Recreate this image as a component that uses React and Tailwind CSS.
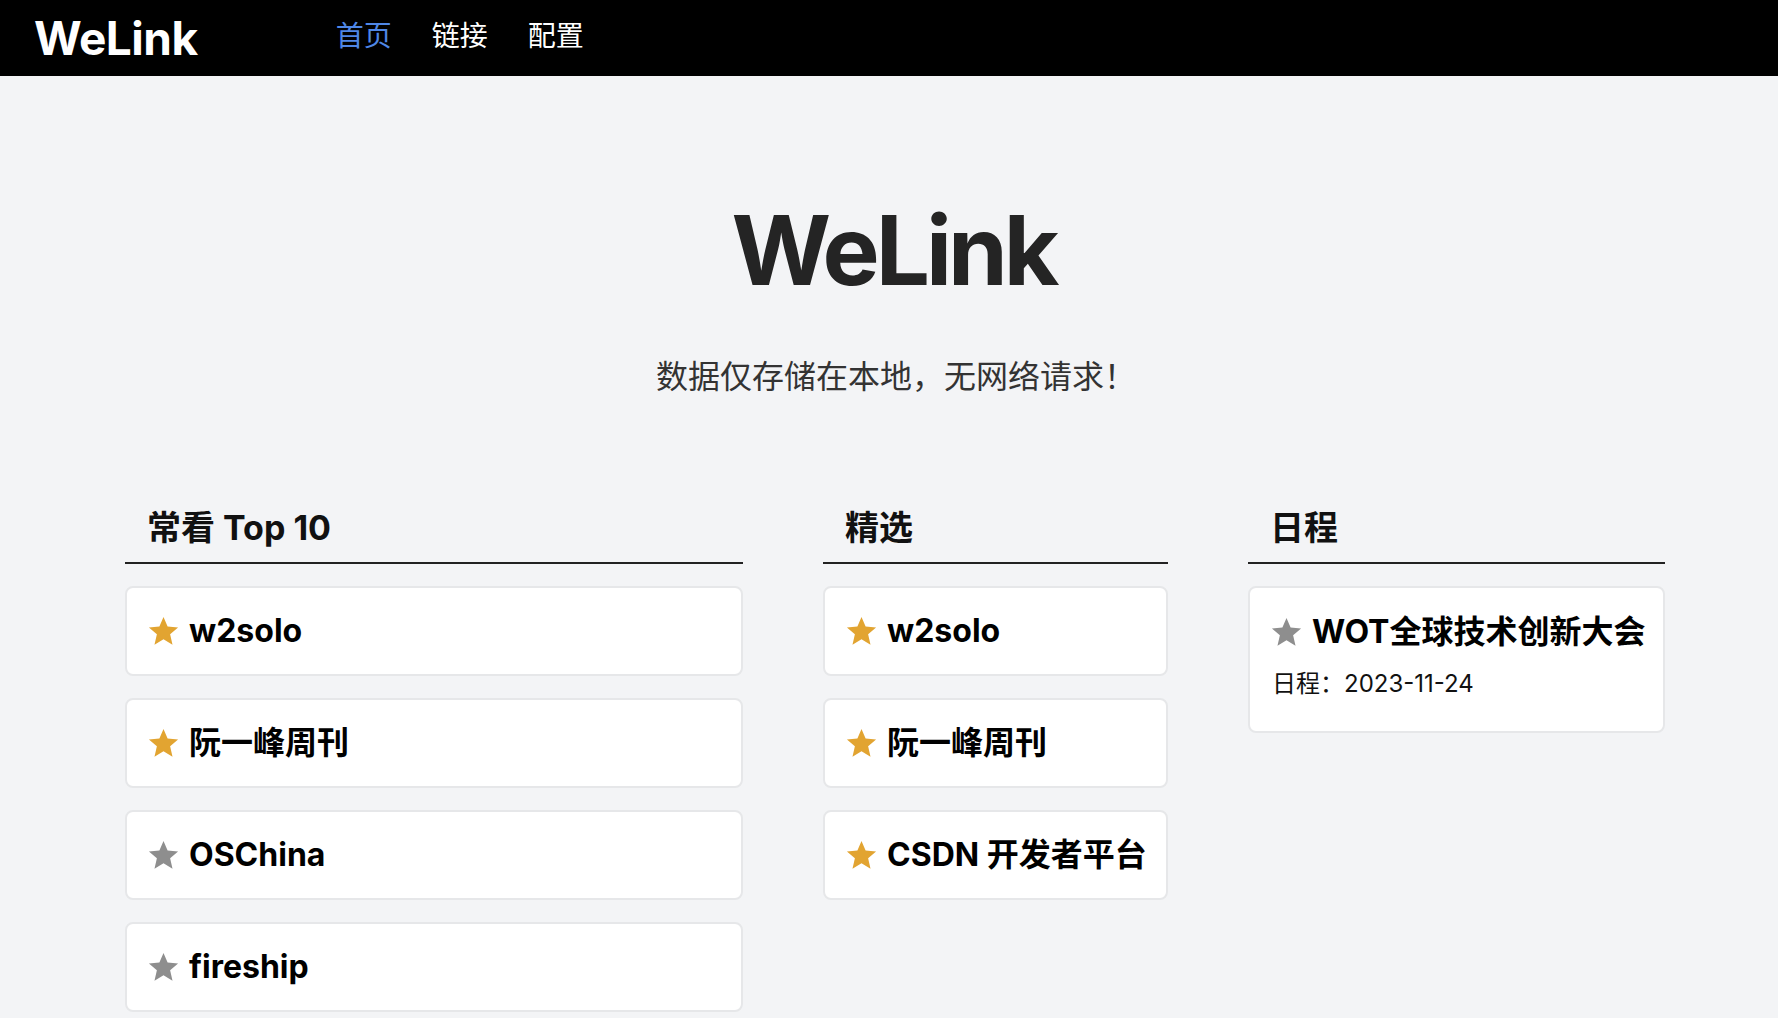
import React from "react";
import { MdStar } from "react-icons/md";

const FONT = "font-['Inter','Noto_Sans_CJK_SC',sans-serif]";

function Card({ title, on }) {
  return (
    <div className="h-[90px] bg-white border-2 border-[#e6e7e9] rounded-lg flex items-center pl-[19px] pr-[20px]">
      <MdStar size={35} className={on ? "text-[#e2a431] shrink-0" : "text-[#8e8e8e] shrink-0"} />
      <span className="ml-[8px] text-[32px] font-bold leading-[40px] text-black whitespace-nowrap">
        {title}
      </span>
    </div>
  );
}

function Heading({ children }) {
  return (
    <h2 className="px-[22px] text-[34px] font-bold leading-[48px] pb-[10px] border-b-2 border-[#222] text-[#111]">
      {children}
    </h2>
  );
}

export default function App() {
  return (
    <div className={`min-h-screen bg-[#f3f4f6] ${FONT}`}>
      <header className="h-[76px] bg-black flex items-center pl-[34px]">
        <div className="text-[46px] font-bold leading-none text-white tracking-[-0.5px] -mt-[1px]">WeLink</div>
        <nav className="ml-[138px] flex gap-[40px] text-[28px] leading-none -mt-[4px]">
          <span className="text-[#4f87e6]">首页</span>
          <span className="text-white">链接</span>
          <span className="text-white">配置</span>
        </nav>
      </header>

      <main className="pt-[126px]">
        <h1 className="pl-[9px] text-center text-[96px] font-bold leading-none text-[#242424] tracking-[-4px]">WeLink</h1>
        <p className="mt-[55px] pl-[14px] text-center text-[32px] leading-[48px] text-[#333]">
          数据仅存储在本地，无网络请求！
        </p>

        <div className="mt-[103px] ml-[125px] w-[1540px] flex gap-[80px] items-start">
          <section className="w-[618px]">
            <Heading>常看 Top 10</Heading>
            <div className="mt-[22px] flex flex-col gap-[22px]">
              <Card title="w2solo" on />
              <Card title="阮一峰周刊" on />
              <Card title="OSChina" />
              <Card title="fireship" />
            </div>
          </section>

          <section className="w-[345px]">
            <Heading>精选</Heading>
            <div className="mt-[22px] flex flex-col gap-[22px]">
              <Card title="w2solo" on />
              <Card title="阮一峰周刊" on />
              <Card title="CSDN 开发者平台" on />
            </div>
          </section>

          <section className="w-[417px]">
            <Heading>日程</Heading>
            <div className="mt-[22px]">
              <div className="bg-white border-2 border-[#e6e7e9] rounded-lg pl-[19px] pt-[24px] pb-[29px]">
                <div className="flex items-center h-[40px]">
                  <MdStar size={35} className="text-[#8e8e8e] shrink-0" />
                  <span className="ml-[8px] text-[32px] font-bold leading-[40px] text-black whitespace-nowrap">
                    WOT全球技术创新大会
                  </span>
                </div>
                <div className="mt-[14px] pl-[3px] text-[24px] leading-[36px] text-[#111]">
                  日程：2023-11-24
                </div>
              </div>
            </div>
          </section>
        </div>
      </main>
    </div>
  );
}
